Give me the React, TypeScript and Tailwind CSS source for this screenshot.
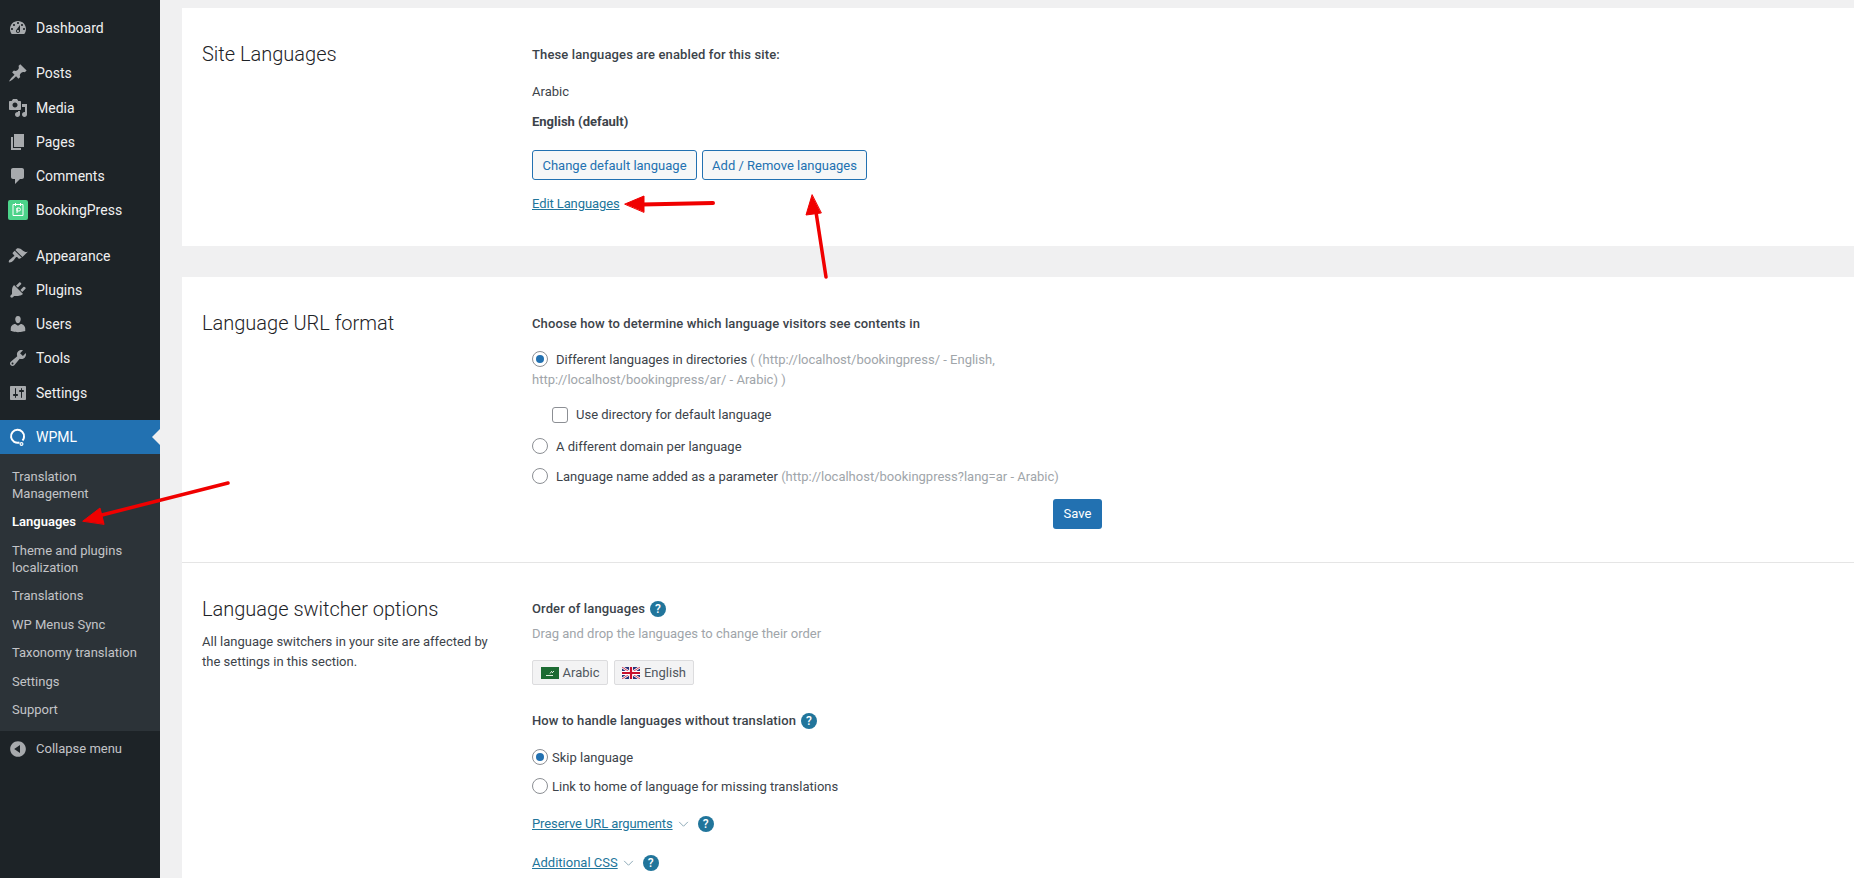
import type { ReactNode } from "react";

const ICONS: Record<string, string> = {
  dashboard:
    "M3.76 16h12.48c1.1-1.37 1.76-3.11 1.76-5 0-4.42-3.58-8-8-8s-8 3.58-8 8c0 1.89.66 3.63 1.76 5zM10 4c.55 0 1 .45 1 1s-.45 1-1 1-1-.45-1-1 .45-1 1-1zM6 6c.55 0 1 .45 1 1s-.45 1-1 1-1-.45-1-1 .45-1 1-1zm8 0c.55 0 1 .45 1 1s-.45 1-1 1-1-.45-1-1 .45-1 1-1zm-5.37 5.55L12 7v6c0 1.1-.9 2-2 2s-2-.9-2-2c0-.57.24-1.08.63-1.45zM4 10c.55 0 1 .45 1 1s-.45 1-1 1-1-.45-1-1 .45-1 1-1zm12 0c.55 0 1 .45 1 1s-.45 1-1 1-1-.45-1-1 .45-1 1-1zm-5 3c0-.55-.45-1-1-1s-1 .45-1 1 .45 1 1 1 1-.45 1-1z",
  posts:
    "M10.44 3.02l1.82-1.82 6.36 6.35-1.83 1.82c-1.05-.68-2.48-.57-3.41.36l-.75.75c-.92.93-1.04 2.35-.35 3.41l-1.83 1.82-2.41-2.41-2.8 2.79c-.42.42-3.38 2.71-3.8 2.29s1.86-3.39 2.28-3.81l2.79-2.79L4.1 9.36l1.83-1.82c1.05.69 2.48.57 3.4-.36l.75-.75c.93-.92 1.05-2.35.36-3.41z",
  media:
    "M13 11V4c0-.55-.45-1-1-1h-1.67L9 1H5L3.67 3H2c-.55 0-1 .45-1 1v7c0 .55.45 1 1 1h10c.55 0 1-.45 1-1zM7 4.5c1.38 0 2.5 1.12 2.5 2.5S8.38 9.5 7 9.5 4.5 8.38 4.5 7 5.62 4.5 7 4.5zM14 6h5v10.5c0 1.38-1.12 2.5-2.5 2.5S14 17.88 14 16.5s1.12-2.5 2.5-2.5c.17 0 .34.02.5.05V9h-3V6zm-4 8.05V13h2v3.5c0 1.38-1.12 2.5-2.5 2.5S7 17.88 7 16.5 8.12 14 9.5 14c.17 0 .34.02.5.05z",
  pages: "M6 15V2h10v13H6zm-1 1h8v2H3V5h2v11z",
  comments: "M5 2h9c1.1 0 2 .9 2 2v7c0 1.1-.9 2-2 2h-2l-5 5v-5H5c-1.1 0-2-.9-2-2V4c0-1.1.9-2 2-2z",
  appearance:
    "M14.48 11.06L7.41 3.99l1.5-1.5c.5-.56 2.3-.47 3.51.32 1.21.8 1.43 1.28 2.91 2.1 1.18.64 2.45 1.26 4.45.85zm-.71.71L6.7 4.7 4.93 6.47c-.39.39-.39 1.02 0 1.41l1.06 1.06c.39.39.39 1.03 0 1.42-.6.6-1.43 1.11-2.21 1.69-.35.26-.7.53-1.01.84C1.43 13.23.18 15.54 1 16.36s3.13-.43 4.47-1.78c.31-.31.58-.66.84-1.01.58-.78 1.09-1.61 1.69-2.21.39-.39 1.02-.39 1.41 0l1.06 1.06c.39.39 1.02.39 1.41 0z",
  plugins:
    "M13.11 4.36L9.87 7.6 8 5.73l3.24-3.24c.35-.34 1.05-.2 1.56.32.52.51.66 1.21.31 1.55zm-8 1.77l.91-1.12 9.01 9.01-1.19.84c-.71.71-2.63 1.16-3.82 1.16H6.14L4.9 17.26c-.59.59-1.54.59-2.12 0-.59-.58-.59-1.53 0-2.12l1.24-1.24v-3.88c0-1.13.4-3.19 1.09-3.89zm7.26 3.97l3.24-3.24c.34-.35 1.04-.21 1.55.31.52.51.66 1.21.31 1.55l-3.24 3.25z",
  users:
    "M10 9.25c-2.27 0-2.73-3.44-2.73-3.44C7 4.02 7.82 2 9.97 2c2.16 0 2.98 2.02 2.71 3.81 0 0-.41 3.44-2.68 3.44zm0 2.57L12.72 10c2.39 0 4.52 2.33 4.52 4.53v2.49s-3.65 1.13-7.24 1.13c-3.65 0-7.24-1.13-7.24-1.13v-2.49c0-2.25 1.94-4.48 4.47-4.48z",
  tools:
    "M16.68 9.77c-1.34 1.34-3.3 1.67-4.95.99l-5.41 6.52c-.99.99-2.59.99-3.58 0s-.99-2.59 0-3.57l6.52-5.42c-.68-1.65-.35-3.61.99-4.95 1.28-1.28 3.12-1.62 4.72-1.06l-2.89 2.89 2.82 2.82 2.86-2.87c.53 1.58.18 3.39-1.08 4.65zM3.81 16.21c.4.39 1.04.39 1.43 0 .4-.4.4-1.04 0-1.43-.39-.4-1.03-.4-1.43 0-.39.39-.39 1.03 0 1.43z",
  settings:
    "M18 16V4c0-.55-.45-1-1-1H3c-.55 0-1 .45-1 1v12c0 .55.45 1 1 1h14c.55 0 1-.45 1-1zM8 11h1c.55 0 1 .45 1 1s-.45 1-1 1H8v1.5c0 .28-.22.5-.5.5s-.5-.22-.5-.5V13H6c-.55 0-1-.45-1-1s.45-1 1-1h1V5.5c0-.28.22-.5.5-.5s.5.22.5.5V11zm5-2h-1c-.55 0-1-.45-1-1s.45-1 1-1h1V5.5c0-.28.22-.5.5-.5s.5.22.5.5V7h1c.55 0 1 .45 1 1s-.45 1-1 1h-1v5.5c0 .28-.22.5-.5.5s-.5-.22-.5-.5V9z",
  collapse: "M10 2.16c4.33 0 7.84 3.51 7.84 7.84s-3.51 7.84-7.84 7.84S2.16 14.33 2.16 10 5.71 2.16 10 2.16zm2 11.72V6.12L6.18 9.97z",
};

const SUBMENU: { label: ReactNode; current?: boolean }[] = [
  { label: <>Translation<br />Management</> },
  { label: "Languages", current: true },
  { label: <>Theme and plugins<br />localization</> },
  { label: "Translations" },
  { label: "WP Menus Sync" },
  { label: "Taxonomy translation" },
  { label: "Settings" },
  { label: "Support" },
];

function MenuIcon({ name }: { name: string }) {
  return (
    <svg viewBox="0 0 20 20" className="w-5 h-5 shrink-0 fill-[#a7aaad]" fillRule="evenodd">
      <path d={ICONS[name]} />
    </svg>
  );
}

function MenuItem({ icon, label }: { icon: string; label: string }) {
  return (
    <div className="flex items-center h-[34.25px] pl-2 gap-2 text-[14px] text-[#f0f0f1]">
      <MenuIcon name={icon} />
      <span>{label}</span>
    </div>
  );
}

function Radio({ checked }: { checked?: boolean }) {
  return (
    <span className="inline-flex items-center justify-center w-4 h-4 -my-1 rounded-full border border-[#8c8f94] bg-white align-[1px] shrink-0">
      {checked && <span className="w-2 h-2 rounded-full bg-[#2271b1]" />}
    </span>
  );
}

function Help() {
  return (
    <span className="inline-flex items-center justify-center w-4 h-4 rounded-full bg-[#21759b] text-white text-[12px] leading-none font-medium">
      ?
    </span>
  );
}

function Chevron() {
  return (
    <svg viewBox="0 0 12 8" className="w-[11px] h-[7px] fill-none stroke-[#7f9fae]" strokeWidth="1">
      <path d="M1 1l5 5 5-5" />
    </svg>
  );
}

function SaudiFlag() {
  return (
    <svg viewBox="0 0 18 12" className="w-[18px] h-3">
      <rect width="18" height="12" fill="#1c6b33" />
      <path d="M5 8.5h7M9 6.5l2-2.5M11 6l2-2" stroke="#dfeedd" strokeWidth="1" fill="none" />
    </svg>
  );
}

function UkFlag() {
  return (
    <svg viewBox="0 0 18 12" className="w-[18px] h-3">
      <rect width="18" height="12" fill="#26337a" />
      <path d="M0 0l18 12M18 0L0 12" stroke="#fff" strokeWidth="2.4" />
      <path d="M0 0l18 12M18 0L0 12" stroke="#c8102e" strokeWidth="0.8" />
      <path d="M9 0v12M0 6h18" stroke="#fff" strokeWidth="4" />
      <path d="M9 0v12M0 6h18" stroke="#c8102e" strokeWidth="2.2" />
    </svg>
  );
}

function LangChip({ flag, label, width }: { flag: ReactNode; label: string; width: string }) {
  return (
    <span className={`flex items-center justify-center gap-1 h-[25px] rounded-[2px] border border-[#dcdcde] bg-[#f3f3f4] text-[#50575e] ${width}`}>
      {flag}
      {label}
    </span>
  );
}

function Arrows() {
  return (
    <svg className="absolute left-0 top-0 pointer-events-none" width="1854" height="878">
      <g stroke="#f00000" strokeWidth="3.5" strokeLinecap="round" fill="#f00000">
        <path d="M228 483L98 516" fill="none" />
        <path d="M83 521L100 508L104 524Z" strokeWidth="1" />
        <path d="M713 203L642 204.5" fill="none" strokeWidth="4" />
        <path d="M625 204L644 196V212Z" strokeWidth="1" />
        <path d="M826 277L816 212" fill="none" />
        <path d="M812 195L806 215L821 213Z" strokeWidth="1" />
      </g>
    </svg>
  );
}

export default function App() {
  return (
    <div className="relative flex h-[878px] overflow-hidden bg-[#f0f0f1] font-['Roboto','Noto_Sans',sans-serif] text-[13px] leading-5 text-[#3c434a]">
      {/* admin menu */}
      <aside className="w-40 shrink-0 bg-[#1d2327] pt-[11px]">
        <MenuItem icon="dashboard" label="Dashboard" />
        <div className="h-[11px]" />
        <MenuItem icon="posts" label="Posts" />
        <MenuItem icon="media" label="Media" />
        <MenuItem icon="pages" label="Pages" />
        <MenuItem icon="comments" label="Comments" />
        <div className="flex items-center h-[34.25px] pl-2 gap-2 text-[14px] text-[#f0f0f1]">
          <span className="flex items-center justify-center w-5 h-5 rounded-[2px] bg-[#4cd38a]">
            <svg viewBox="0 0 20 20" className="w-5 h-5 fill-none stroke-white" strokeWidth="1">
              <path d="M5 4.5h10v11H5zM7.5 3v3M12.5 3v3" />
              <path d="M9 8h2a1 1 0 010 3H9zM9 8v5" />
            </svg>
          </span>
          <span>BookingPress</span>
        </div>
        <div className="h-[11px]" />
        <MenuItem icon="appearance" label="Appearance" />
        <MenuItem icon="plugins" label="Plugins" />
        <MenuItem icon="users" label="Users" />
        <MenuItem icon="tools" label="Tools" />
        <MenuItem icon="settings" label="Settings" />
        <div className="h-[10px]" />
        <div className="relative flex items-center h-[34px] pl-2 gap-2 text-[14px] text-white bg-[#2271b1]">
          <svg viewBox="0 0 20 20" className="w-5 h-5 fill-none stroke-white" strokeWidth="2">
            <path d="M11.5 15.5A6.5 6.5 0 1116 10c0 1.5-.5 2.5-1.5 3.5" />
            <circle cx="13.5" cy="17" r="1.4" strokeWidth="1.2" />
          </svg>
          <span>WPML</span>
          <span className="absolute right-0 top-[9px] border-y-[8px] border-r-[8px] border-y-transparent border-r-[#f0f0f1]" />
        </div>
        <ul className="bg-[#2c3338] pt-[8.25px] pb-[7px] text-[13px] leading-[17px] text-[#c3c4c7]">
          {SUBMENU.map((item, i) => (
            <li key={i} className={item.current ? "py-[5.75px] pl-3 font-semibold text-white" : "py-[5.75px] pl-3"}>
              {item.label}
            </li>
          ))}
        </ul>
        <div className="flex items-center h-[35px] pl-2 gap-2 text-[13px] text-[#c3c4c7]">
          <MenuIcon name="collapse" />
          <span>Collapse menu</span>
        </div>
      </aside>

      {/* settings panels */}
      <main className="flex-1 pl-[22px] pt-2">
        <section className="flex h-[238px] bg-white pl-5 pt-[34px]">
          <h2 className="w-[330px] text-[20px] leading-6 font-light text-[#1d2327]">Site Languages</h2>
          <div className="pt-[3px]">
            <p className="font-medium tracking-[0.12px]">These languages are enabled for this site:</p>
            <p className="mt-[17px]">Arabic</p>
            <p className="mt-[10px] font-bold">English (default)</p>
            <div className="mt-[18px] flex gap-[5px]">
              <button className="w-[165px] h-[30px] pt-px rounded-[3px] border border-[#2271b1] bg-[#f6f7f7] text-[#2271b1]">Change default language</button>
              <button className="w-[165px] h-[30px] pt-px rounded-[3px] border border-[#2271b1] bg-[#f6f7f7] text-[#2271b1]">Add / Remove languages</button>
            </div>
            <a className="block mt-[14px] underline text-[#21759b] tracking-[-0.1px]">Edit Languages</a>
          </div>
        </section>

        <section className="flex h-[286px] mt-[31px] bg-white border-b border-[#e5e5e5] pl-5 pt-[34px]">
          <h2 className="w-[330px] text-[20px] leading-6 font-light text-[#1d2327]">Language URL format</h2>
          <div className="pt-[3px] w-[570px]">
            <p className="font-medium tracking-[0.12px]">Choose how to determine which language visitors see contents in</p>
            <p className="mt-[16px]">
              <Radio checked />
              <span className="ml-[8px]">Different languages in directories</span>
              <span className="text-[#a0a5aa]"> ( (http://localhost/bookingpress/ - English,<br />http://localhost/bookingpress/ar/ - Arabic) )</span>
            </p>
            <p className="mt-[15px] ml-5 flex items-center gap-2">
              <span className="w-4 h-4 rounded-[3px] border border-[#8c8f94] bg-white" />
              Use directory for default language
            </p>
            <p className="mt-[12px]"><Radio /><span className="ml-[8px]">A different domain per language</span></p>
            <p className="mt-[10px]">
              <Radio />
              <span className="ml-[8px]">Language name added as a parameter</span>
              <span className="text-[#a0a5aa]"> (http://localhost/bookingpress?lang=ar - Arabic)</span>
            </p>
            <div className="mt-[12px] flex justify-end">
              <button className="w-[49px] h-[30px] rounded-[3px] bg-[#2271b1] text-white">Save</button>
            </div>
          </div>
        </section>

        <section className="flex h-[400px] bg-white pl-5 pt-[34px]">
          <div className="w-[330px]">
            <h2 className="text-[20px] leading-6 font-light text-[#1d2327]">Language switcher options</h2>
            <p className="mt-[11px]">All language switchers in your site are affected by<br />the settings in this section.</p>
          </div>
          <div className="pt-[2px]">
            <p className="flex items-center gap-[5px] font-medium tracking-[0.12px]">Order of languages <Help /></p>
            <p className="mt-[5px] text-[#a0a5aa]">Drag and drop the languages to change their order</p>
            <div className="mt-[16px] flex gap-[6px]">
              <LangChip flag={<SaudiFlag />} label="Arabic" width="w-[76px]" />
              <LangChip flag={<UkFlag />} label="English" width="w-[80px]" />
            </div>
            <p className="mt-[26px] flex items-center gap-[5px] font-medium tracking-[0.12px]">How to handle languages without translation <Help /></p>
            <p className="mt-[17px]"><Radio checked /><span className="ml-1">Skip language</span></p>
            <p className="mt-[9px]"><Radio /><span className="ml-1">Link to home of language for missing translations</span></p>
            <p className="mt-[17px] flex items-center gap-[5px]">
              <a className="underline text-[#21759b] tracking-[-0.1px]">Preserve URL arguments</a>
              <Chevron />
              <span className="ml-[4px] flex"><Help /></span>
            </p>
            <p className="mt-[19px] flex items-center gap-[5px]">
              <a className="underline text-[#21759b]">Additional CSS</a>
              <Chevron />
              <span className="ml-[4px] flex"><Help /></span>
            </p>
          </div>
        </section>
      </main>

      <Arrows />
    </div>
  );
}
